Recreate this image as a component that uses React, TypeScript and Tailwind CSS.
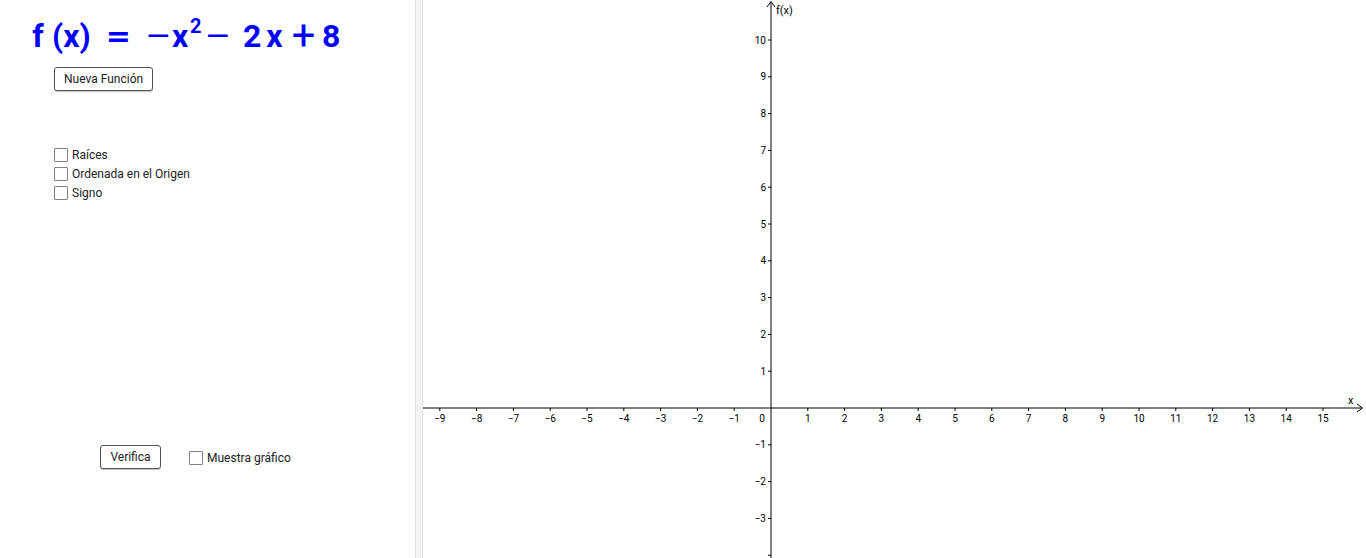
import React from 'react'

const UNIT = 36.8
const OX = 348
const OY = 408

function Checkbox({ label }: { label: string }) {
  return (
    <label className="flex items-center gap-[4px] h-[19px] text-[12px] text-[#222]">
      <span className="w-[14px] h-[14px] border border-[#808080] rounded-[1px] bg-white" />
      <span>{label}</span>
    </label>
  )
}

function Graph() {
  const xs = Array.from({ length: 25 }, (_, i) => i - 9).filter((k) => k !== 0)
  const ys = [10, 9, 8, 7, 6, 5, 4, 3, 2, 1, -1, -2, -3]
  const fmt = (n: number) => (n < 0 ? '\u2212' + Math.abs(n) : String(n))
  return (
    <svg width="943" height="558" className="block" style={{ fontFamily: 'Roboto, "Liberation Sans", sans-serif' }}>
      {/* x axis */}
      <line x1="0" y1={OY} x2="939" y2={OY} stroke="#000" strokeWidth="1" />
      <path d={`M934 ${OY - 4} L939.5 ${OY} L934 ${OY + 4}`} fill="none" stroke="#000" strokeWidth="1" />
      {/* y axis */}
      <line x1={OX} y1="2" x2={OX} y2="558" stroke="#000" strokeWidth="1" />
      <path d={`M${OX - 4} 7 L${OX} 1.5 L${OX + 4} 7`} fill="none" stroke="#000" strokeWidth="1" />
      {xs.map((k) => {
        const x = OX + k * UNIT
        return (
          <g key={k}>
            <line x1={x} y1={OY} x2={x} y2={OY + 3} stroke="#000" />
            <text x={x} y={OY + 14} fontSize="10" textAnchor="middle" fill="#000">
              {fmt(k)}
            </text>
          </g>
        )
      })}
      <text x={OX - 9} y={OY + 14} fontSize="10" textAnchor="middle" fill="#000">0</text>
      {ys.map((k) => {
        const y = OY - k * UNIT
        return (
          <g key={k}>
            <line x1={OX - 3} y1={y} x2={OX} y2={y} stroke="#000" />
            <text x={OX - 5} y={y + 3.5} fontSize="10" textAnchor="end" fill="#000">
              {fmt(k)}
            </text>
          </g>
        )
      })}
      <line x1={OX - 3} y1={OY + 4 * UNIT} x2={OX} y2={OY + 4 * UNIT} stroke="#000" />
      <text x={OX + 5} y="14" fontSize="11" fill="#000">f(x)</text>
      <text x="925" y={OY - 4} fontSize="11" fill="#000">x</text>
    </svg>
  )
}

export default function App() {
  return (
    <div className="w-[1366px] h-[558px] flex bg-white overflow-hidden" style={{ fontFamily: 'Roboto, "Liberation Sans", sans-serif' }}>
      {/* Left panel */}
      <div className="w-[415px] h-full flex flex-col">
        {/* formula */}
        <div className="pl-[32px] pt-[16px] h-[56px] flex items-baseline text-[32px] font-bold text-[#0000ff] leading-[40px] whitespace-pre">
          <span className="inline-block w-[12px] text-center">f</span>
          <span className="inline-block ml-[8px] w-[38px] text-center">(x)</span>
          <span className="inline-block ml-[17px] w-[23px] text-center scale-x-[1.35]">=</span>
          <span className="inline-block ml-[18px] w-[20px] text-center font-normal scale-x-[1.5]">−</span>
          <span className="inline-block ml-[4px] w-[16px] text-center">x</span>
          <span className="inline-block ml-[2px] w-[10px] text-center text-[20px] relative top-[-14px]">2</span>
          <span className="inline-block ml-[7px] w-[21px] text-center font-normal scale-x-[1.5]">−</span>
          <span className="inline-block ml-[15px] w-[15px] text-center">2</span>
          <span className="inline-block ml-[8px] w-[17px] text-center">x</span>
          <span className="inline-block ml-[9px] w-[23px] text-center font-normal scale-[1.3]">+</span>
          <span className="inline-block ml-[7px] w-[18px] text-center">8</span>
        </div>
        <div className="pl-[54px] mt-[10px]">
          <button className="h-[24px] px-[9px] border border-[#555] rounded-[3px] bg-white text-[12px] text-[#222] shadow-[0_1px_1px_rgba(0,0,0,0.25)]">
            Nueva Función
          </button>
        </div>
        <div className="pl-[54px] mt-[54px] flex flex-col">
          <Checkbox label="Raíces" />
          <Checkbox label="Ordenada en el Origen" />
          <Checkbox label="Signo" />
        </div>
        <div className="pl-[100px] mt-[243px] flex items-center gap-[28px]">
          <button className="h-[24px] w-[61px] border border-[#555] rounded-[3px] bg-white text-[12px] text-[#222] shadow-[0_1px_1px_rgba(0,0,0,0.25)]">
            Verifica
          </button>
          <div className="mt-[2px]">
            <Checkbox label="Muestra gráfico" />
          </div>
        </div>
      </div>
      {/* Divider */}
      <div className="w-[8px] h-full bg-[#f3f3f3] border-l border-r border-[#e0e0e0]" />
      {/* Graphics view */}
      <div className="flex-1 h-full">
        <Graph />
      </div>
    </div>
  )
}
